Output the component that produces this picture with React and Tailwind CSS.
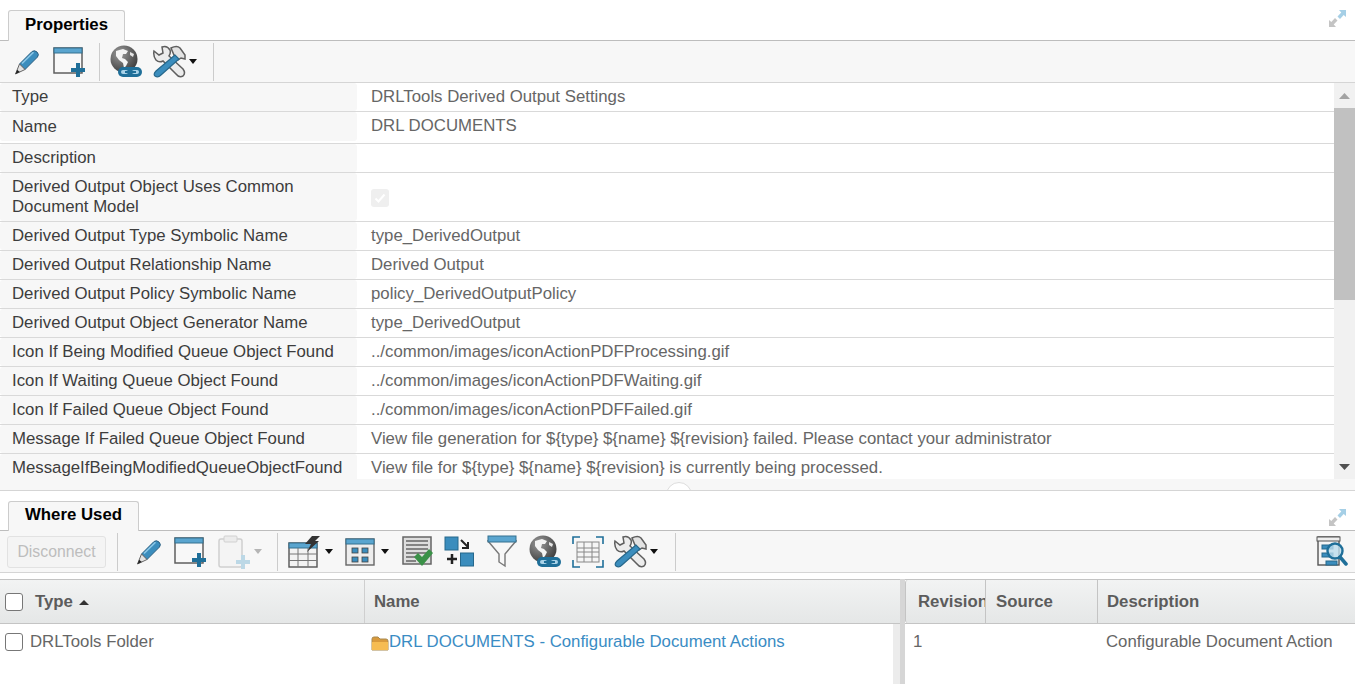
import React from "react";

const ROWS = [
  ["Type", "DRLTools Derived Output Settings", "h-[29px]", ""],
  ["Name", "DRL DOCUMENTS", "h-[32px] pb-[2px]", "pb-[2px]"],
  ["Description", "", "h-[29px]", ""],
  ["Derived Output Object Uses Common Document Model", null, "h-[49px]", ""],
  ["Derived Output Type Symbolic Name", "type_DerivedOutput", "h-[29px]", ""],
  ["Derived Output Relationship Name", "Derived Output", "h-[29px]", ""],
  ["Derived Output Policy Symbolic Name", "policy_DerivedOutputPolicy", "h-[29px]", ""],
  ["Derived Output Object Generator Name", "type_DerivedOutput", "h-[29px]", ""],
  ["Icon If Being Modified Queue Object Found", "../common/images/iconActionPDFProcessing.gif", "h-[29px]", ""],
  ["Icon If Waiting Queue Object Found", "../common/images/iconActionPDFWaiting.gif", "h-[29px]", ""],
  ["Icon If Failed Queue Object Found", "../common/images/iconActionPDFFailed.gif", "h-[29px]", ""],
  ["Message If Failed Queue Object Found", "View file generation for ${type} ${name} ${revision} failed. Please contact your administrator", "h-[29px]", ""],
  ["MessageIfBeingModifiedQueueObjectFound", "View file for ${type} ${name} ${revision} is currently being processed.", "h-[29px]", ""],
];

const BLUE = "#3b8dbd";
const DARK = "#1f6f99";

function Pencil({ className }) {
  return (
    <svg viewBox="0 0 26 26" width="26" height="26" className={className}>
      <path d="M5.5 15 L18 2.5 Q20.5 0.8 23 3 Q25.5 5.5 23.5 8 L11 20.5 Z" fill={BLUE} stroke="#2c5f80" strokeWidth="1" />
      <path d="M8 14.5 L19.5 3.2" stroke="#8cc8e8" strokeWidth="1.6" fill="none" />
      <path d="M5.5 15 L11 20.5 L1.5 25 Z" fill="#e2e2e2" stroke="#666" strokeWidth="1" />
      <path d="M1.5 25 L3.2 20.8 L5.8 23 Z" fill="#222" />
    </svg>
  );
}

function WindowPlus({ className }) {
  return (
    <svg viewBox="0 0 32 30" width="32" height="30" className={className}>
      <rect x="1" y="1" width="28" height="25" fill="#f8f8f8" stroke="#5f5f5f" strokeWidth="1.5" />
      <rect x="1" y="1" width="28" height="5" fill="#5aa5cf" stroke="#35718f" strokeWidth="1" />
      <path d="M18 21 h5 v-5 h4 v5 h5 v4 h-5 v5 h-4 v-5 h-5 Z" fill={DARK} />
    </svg>
  );
}

function Clipboard({ className }) {
  return (
    <svg viewBox="0 0 32 34" width="32" height="34" className={className}>
      <rect x="1" y="4" width="23" height="28" rx="2" fill="#f4f4f4" stroke="#d0d0d0" strokeWidth="1.5" />
      <rect x="6" y="1" width="13" height="6" rx="1" fill="#ececec" stroke="#d0d0d0" />
      <path d="M18 25 h5 v-5 h4 v5 h5 v4 h-5 v5 h-4 v-5 h-5 Z" fill="#bcd8e6" />
    </svg>
  );
}

function GlobeLink({ className }) {
  return (
    <svg viewBox="0 0 32 33" width="32" height="33" className={className}>
      <defs>
        <radialGradient id="globeFill" cx="35%" cy="30%" r="75%">
          <stop offset="0" stopColor="#9a9a9a" />
          <stop offset="1" stopColor="#3d3d3d" />
        </radialGradient>
      </defs>
      <circle cx="14" cy="14" r="13.5" fill="url(#globeFill)" />
      <path d="M6 6 L13 4 L18 6 L16 9 L13 9 L12 13 L15 14 L18 17 L16 21 L14 23 L13 18 L9 15 L6 11 Z" fill="#f4f4f4" />
      <path d="M20 7 L24 9 L23 12 L20 10 Z" fill="#e6e6e6" />
      <rect x="8" y="22" width="24" height="10" rx="5" fill={DARK} />
      <rect x="11" y="25" width="7" height="4" rx="2" fill="#a9d2e8" />
      <rect x="22" y="25" width="7" height="4" rx="2" fill="#a9d2e8" />
      <path d="M15 27 h11" stroke={DARK} strokeWidth="2" />
    </svg>
  );
}

function Tools({ className }) {
  return (
    <svg viewBox="0 0 34 33" width="34" height="33" className={className}>
      <path d="M2 6 L7 10 L11 8 L10 2 Q15 0 18 5 Q19 8 17 11 L31 24 Q34 28 31 31 Q27 33 24 29 L11 16 Q7 18 4 15 Q1 11 2 6 Z" fill="#ececec" stroke="#5f5f5f" strokeWidth="1.5" />
      <path d="M19 3 Q25 0 28 3 L33 10 L33 14 L29 13 L26 15 L22 10 Z" fill="#e2e2e2" stroke="#5f5f5f" strokeWidth="1.5" />
      <path d="M23 10 L4 26 Q1 29 3 31 Q6 33 9 30 L27 14 Z" fill={BLUE} stroke="#27688c" strokeWidth="1.2" />
    </svg>
  );
}

function Caret({ className, muted }) {
  return (
    <svg viewBox="0 0 8 5" width="8" height="5" className={className}>
      <path d="M0 0 H8 L4 5 Z" fill={muted ? "#b5b5b5" : "#111"} />
    </svg>
  );
}

function GridBolt({ className }) {
  return (
    <svg viewBox="0 0 32 32" width="32" height="32" className={className}>
      <rect x="1" y="7" width="28" height="24" fill="#f3f3f3" stroke="#555" strokeWidth="1.4" />
      <rect x="1" y="7" width="28" height="5" fill="#5aa5cf" stroke="#35718f" />
      <path d="M1 18 H29 M1 24.5 H29 M10 12 V31 M20 12 V31" stroke="#777" strokeWidth="1" />
      <path d="M24 0 L32 0 L27 5 L31 5 L19 16 L23 8 L17 8 Z" fill="#333" />
    </svg>
  );
}

function ViewGrid({ className }) {
  return (
    <svg viewBox="0 0 30 28" width="30" height="28" className={className}>
      <rect x="1" y="1" width="28" height="26" fill="#ededed" stroke="#666" strokeWidth="1.4" />
      <rect x="1" y="1" width="28" height="5" fill="#5aa5cf" stroke="#35718f" />
      <rect x="7" y="10" width="6" height="5" fill={BLUE} stroke="#444" strokeWidth=".8" />
      <rect x="17" y="10" width="6" height="5" fill={BLUE} stroke="#444" strokeWidth=".8" />
      <rect x="7" y="19" width="6" height="5" fill={BLUE} stroke="#444" strokeWidth=".8" />
      <rect x="17" y="19" width="6" height="5" fill={BLUE} stroke="#444" strokeWidth=".8" />
    </svg>
  );
}

function ListCheck({ className }) {
  return (
    <svg viewBox="0 0 32 31" width="32" height="31" className={className}>
      <rect x="1" y="1" width="28" height="27" fill="#ddd" stroke="#666" strokeWidth="1.5" />
      <path d="M4 5 H26 M4 9 H26 M4 13 H26 M4 17 H26 M4 21 H18 M4 25 H14" stroke="#666" strokeWidth="1.4" />
      <path d="M12 21 L16 17 L20 21 L27 13 L31 17 L20 30 Z" fill="#3a9147" />
    </svg>
  );
}

function Swap({ className }) {
  return (
    <svg viewBox="0 0 30 31" width="30" height="31" className={className}>
      <rect x="1" y="1" width="13" height="13" fill={BLUE} stroke="#27688c" />
      <rect x="16.5" y="17" width="13" height="13" fill={BLUE} stroke="#27688c" />
      <path d="M17 4 L24 11 M24 6 V12 H18" stroke="#222" strokeWidth="2" fill="none" />
      <path d="M3 23 H13 M8 18 V28" stroke="#222" strokeWidth="2.5" />
    </svg>
  );
}

function Funnel({ className }) {
  return (
    <svg viewBox="0 0 30 33" width="30" height="33" className={className}>
      <path d="M1 6 H29 L18 19 V31 L12 27 V19 Z" fill="#f7f7f7" stroke="#777" strokeWidth="1.4" />
      <rect x="1" y="1" width="28" height="6" fill="#5aa5cf" stroke="#35718f" />
    </svg>
  );
}

function ExpandGrid({ className }) {
  return (
    <svg viewBox="0 0 32 32" width="32" height="32" className={className}>
      <path d="M1 8 V1 H8 M24 1 H31 V8 M1 24 V31 H8 M24 31 H31 V24" fill="none" stroke={DARK} strokeWidth="1.6" />
      <rect x="5" y="6" width="22" height="20" fill="#f5f5f5" stroke="#888" />
      <path d="M5 12 H27 M5 16 H27 M5 21 H27 M12 6 V26 M20 6 V26" stroke="#888" />
    </svg>
  );
}

function SearchList({ className }) {
  return (
    <svg viewBox="0 0 32 32" width="32" height="32" className={className}>
      <rect x="2" y="1" width="21" height="28" fill="#f5f5f5" stroke="#555" strokeWidth="1.4" />
      <rect x="1" y="1" width="23" height="4" fill="#eee" stroke="#555" />
      <rect x="6" y="9" width="11" height="4" fill={BLUE} stroke="#27688c" />
      <rect x="6" y="17" width="11" height="4" fill={BLUE} stroke="#27688c" />
      <rect x="10" y="25" width="11" height="4" fill={BLUE} stroke="#27688c" />
      <circle cx="19" cy="15" r="7.5" fill="#bcdcec" fillOpacity=".8" stroke={DARK} strokeWidth="2.4" />
      <path d="M24 21 L30 28" stroke={DARK} strokeWidth="3.5" strokeLinecap="round" />
    </svg>
  );
}

function Expand() {
  return (
    <svg viewBox="0 0 17 17" width="17" height="17">
      <path d="M10 0 H17 V7 L14.7 5 L11 9 L8.5 6.5 L12.3 2.5 Z" fill="#a5cfe6" />
      <path d="M7 17 H0 V10 L2.3 12 L6 8 L8.5 10.5 L4.7 14.5 Z" fill="#c4c4c4" />
    </svg>
  );
}

function Sep({ className }) {
  return <div className={`w-px h-[38px] bg-[#ccc] ${className}`} />;
}

function Tab({ label, className }) {
  return (
    <div className={`ml-2 mb-[-1px] flex items-center justify-center bg-[#f7f7f7] border border-b-0 border-[#ccc] rounded-t-[3px] font-bold text-black ${className}`}>
      {label}
    </div>
  );
}

function CheckBox({ className }) {
  return <span className={`block w-[18px] h-[18px] bg-white border border-[#777] rounded-[3px] ${className}`} />;
}

function HeaderCell({ className, children }) {
  return (
    <div className={`h-full flex items-center bg-gradient-to-b from-[#f2f3f3] to-[#e5e7e7] font-bold text-[#5c5c5c] overflow-hidden whitespace-nowrap ${className}`}>
      {children}
    </div>
  );
}

export default function App() {
  return (
    <div className="w-[1355px] h-[684px] overflow-hidden bg-white text-[16.8px] font-['Liberation_Sans',Arial,sans-serif]">
      {/* properties panel */}
      <div className="h-[41px] pt-[10px] flex items-end justify-between border-b border-[#bdbdbd]">
        <Tab label="Properties" className="w-[117px] h-[31px] pb-[2px]" />
        <div className="mr-[9px] mb-[13px] h-[17px]"><Expand /></div>
      </div>
      <div className="h-[42px] flex items-center bg-[#f7f7f7] border-b border-[#d5d5d5]">
        <Pencil className="ml-[14px]" />
        <WindowPlus className="ml-[13px]" />
        <Sep className="ml-[14px]" />
        <GlobeLink className="ml-[10px]" />
        <Tools className="ml-[10px]" />
        <Caret className="ml-[3px]" />
        <Sep className="ml-[16px]" />
      </div>
      <div className="h-[396px] flex overflow-hidden">
        <div className="w-[1334px] h-full overflow-hidden">
          {ROWS.map(([label, value, height, valuePad]) => (
            <div key={label} className={`${height} flex border-b border-[#d9d9d9] box-border`}>
              <div className="w-[357px] shrink-0 pl-3 pr-[10px] flex items-center bg-[#f7f7f7] rounded-[3px] leading-5 text-[#3d3d3d]">{label}</div>
              <div className={`pl-[14px] flex items-center text-[#666] ${valuePad}`}>
                {value === null ? (
                  <span className="w-[18px] h-[18px] mt-[2px] bg-[#efefef] rounded-[3px] flex items-center justify-center">
                    <svg viewBox="0 0 12 12" width="12" height="12"><path d="M1.5 6.5 L4.5 9.5 L10.5 2.5" fill="none" stroke="#fff" strokeWidth="2" /></svg>
                  </span>
                ) : value}
              </div>
            </div>
          ))}
        </div>
        <div className="w-[21px] h-full bg-[#f1f1f1] flex flex-col">
          <div className="h-[25px] flex items-center justify-center">
            <svg viewBox="0 0 11 6" width="11" height="6"><path d="M0 6 L5.5 0 L11 6 Z" fill="#a3a3a3" /></svg>
          </div>
          <div className="h-[192px] bg-[#c1c1c1]" />
          <div className="mt-auto h-[25px] flex items-center justify-center">
            <svg viewBox="0 0 11 6" width="11" height="6"><path d="M0 0 L11 0 L5.5 6 Z" fill="#505050" /></svg>
          </div>
        </div>
      </div>

      {/* splitter */}
      <div className="h-[12px] bg-[#f7f7f7] border-b border-[#d5d5d5] flex justify-center overflow-hidden">
        <span className="block w-[26px] h-[26px] mt-[3px] ml-[3px] rounded-full bg-white border border-[#ddd]" />
      </div>

      {/* where used panel */}
      <div className="h-[40px] pt-[10px] flex items-end justify-between border-b border-[#bdbdbd]">
        <Tab label="Where Used" className="w-[131px] h-[30px] pb-[3px]" />
        <div className="mr-[9px] mb-[4px] h-[17px]"><Expand /></div>
      </div>
      <div className="h-[42px] flex items-center bg-[#f7f7f7] border-b border-[#d5d5d5]">
        <div className="ml-[7px] w-[99px] h-[32px] flex items-center justify-center text-[15.8px] text-[#bdbdbd] bg-[#f4f4f4] border border-[#e2e2e2] rounded-[3px]">Disconnect</div>
        <Sep className="ml-[11px]" />
        <Pencil className="ml-[18px]" />
        <WindowPlus className="ml-[12px]" />
        <Clipboard className="ml-[12px]" />
        <Caret muted className="ml-[4px]" />
        <Sep className="ml-[15px]" />
        <GridBolt className="ml-[10px]" />
        <Caret className="ml-[5px]" />
        <ViewGrid className="ml-[12px]" />
        <Caret className="ml-[6px]" />
        <ListCheck className="ml-[13px]" />
        <Swap className="ml-[10px]" />
        <Funnel className="ml-[13px]" />
        <GlobeLink className="ml-[12px]" />
        <ExpandGrid className="ml-[11px]" />
        <Tools className="ml-[9px]" />
        <Caret className="ml-[3px]" />
        <Sep className="ml-[17px]" />
        <SearchList className="ml-auto mr-[7px]" />
      </div>

      {/* grid */}
      <div className="mt-[6px] flex h-[106px]">
        <div className="w-[900px] shrink-0">
          <div className="h-[45px] flex border-y border-[#c4c4c4]">
            <HeaderCell className="w-[364px] pl-[5px]">
              <CheckBox />
              <span className="ml-3">Type</span>
              <svg viewBox="0 0 10 5" width="10" height="5" className="ml-[6px] mt-[2px]"><path d="M0 5 L5 0 L10 5 Z" fill="#333" /></svg>
            </HeaderCell>
            <HeaderCell className="flex-1 pl-[9px] border-l border-[#cfcfcf]">Name</HeaderCell>
          </div>
          <div className="h-[61px] flex">
            <div className="w-[365px] flex items-start pt-[5px] pl-[5px] text-[#666]">
              <CheckBox className="mt-[4px]" />
              <span className="ml-[7px]">DRLTools Folder</span>
            </div>
            <div className="w-[528px] flex items-start pt-[5px] pl-[6px] text-[#3a8cc4]">
              <svg viewBox="0 0 18 17" width="18" height="17" className="mt-[6px] shrink-0">
                <path d="M1 4 Q1 2 3 2 H7 L9 4 H15 Q17 4 17 6 V15 H1 Z" fill="#d99a3c" stroke="#a8894f" />
                <path d="M1 7 H17 V15 H1 Z" fill="#f6bc52" />
              </svg>
              <span>DRL DOCUMENTS - Configurable Document Actions</span>
            </div>
            <div className="w-[7px] bg-[#ececec]" />
          </div>
        </div>
        <div className="w-[5px] bg-[#d6d6d6]" />
        <div className="flex-1">
          <div className="h-[45px] flex border-y border-[#c4c4c4]">
            <HeaderCell className="w-[80px] pl-[12px] border-l border-[#c4c4c4] rounded-l-[3px]">Revision</HeaderCell>
            <HeaderCell className="w-[112px] pl-[10px] border-l border-[#c4c4c4]">Source</HeaderCell>
            <HeaderCell className="flex-1 pl-[9px] border-l border-[#c4c4c4]">Description</HeaderCell>
          </div>
          <div className="h-[61px] flex pt-[5px] text-[#666]">
            <span className="w-[201px] pl-[8px]">1</span>
            <span className="whitespace-nowrap">Configurable Document Action</span>
          </div>
        </div>
      </div>
    </div>
  );
}
